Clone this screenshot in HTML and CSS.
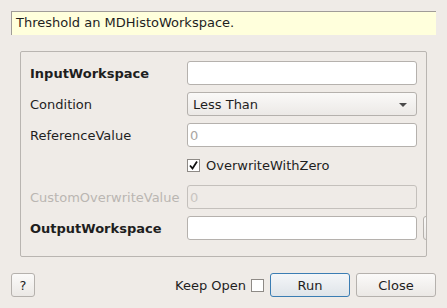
FILE: index.html
```html
<!DOCTYPE html>
<html lang="en">
<head>
  <meta charset="UTF-8">
  <title>ThresholdMDHisto Input Dialog</title>
  <link rel="stylesheet" href="styles.css">
</head>
<body>
  <div class="dialog">
    <div class="description">Threshold an MDHistoWorkspace.</div>

    <div class="group-box">
      <div class="form-grid">
        <label class="prop-label required">InputWorkspace</label>
        <input class="line-edit" type="text">

        <label class="prop-label">Condition</label>
        <div class="combo">
          <span>Less Than</span>
          <span class="combo-arrow"></span>
        </div>

        <label class="prop-label">ReferenceValue</label>
        <input class="line-edit" type="text" placeholder="0">

        <span></span>
        <div class="check-row">
          <span class="check-box checked">
            <svg width="11" height="11" viewBox="0 0 11 11">
              <path d="M2 5.5 L4.5 8.5 L9 1.5" fill="none" stroke="#111" stroke-width="1.8"/>
            </svg>
          </span>
          <span>OverwriteWithZero</span>
        </div>

        <label class="prop-label disabled">CustomOverwriteValue</label>
        <input class="line-edit" type="text" placeholder="0" disabled>

        <label class="prop-label required">OutputWorkspace</label>
        <div class="output-row">
          <input class="line-edit" type="text">
          <button class="btn browse-btn"></button>
        </div>
      </div>
    </div>

    <div class="button-bar">
      <button class="btn help-btn">?</button>
      <div class="spacer"></div>
      <span class="keep-open">Keep Open</span>
      <span class="check-box"></span>
      <button class="btn btn-default">Run</button>
      <button class="btn">Close</button>
    </div>
  </div>
</body>
</html>
```

FILE: styles.css
```css
* {
  margin: 0;
  padding: 0;
  box-sizing: border-box;
}

:root {
  --window: #efebe7;
  --text: #1e1e1e;
  --border: #b5b1ad;
  --frame: #b9b5b1;
  --disabled: #bab6b2;
}

body {
  width: 447px;
  height: 308px;
  background: var(--window);
  font-family: 'DejaVu Sans', sans-serif;
  font-size: 13px;
  color: var(--text);
  overflow: hidden;
}

.dialog {
  padding: 11px 11px 0 11px;
}

.description {
  height: 24px;
  line-height: 22px;
  padding-left: 4px;
  background: #ffffdc;
  border-top: 1px solid #a09c98;
  border-left: 1px solid #a09c98;
}

.group-box {
  margin: 16px 9px 0 9px;
  height: 206px;
  border: 1px solid var(--frame);
  border-radius: 2px;
  padding: 9px 9px 0 9px;
  overflow: hidden;
}

.form-grid {
  display: grid;
  grid-template-columns: 157px 230px;
  grid-template-rows: 24px 24px 24px 24px 24px 24px;
  row-gap: 7px;
  align-items: center;
}

.prop-label {
  white-space: nowrap;
}

.prop-label.required {
  font-weight: bold;
}

.prop-label.disabled {
  color: var(--disabled);
}

.line-edit {
  width: 230px;
  height: 24px;
  border: 1px solid var(--border);
  border-radius: 3px;
  background: #fff;
  font-family: inherit;
  font-size: 13px;
  padding: 0 2px;
  color: var(--text);
  outline: none;
}

.line-edit::placeholder {
  color: #aaa6a2;
}

.line-edit:disabled {
  background: var(--window);
  border-color: #c4c0bc;
}

.line-edit:disabled::placeholder {
  color: #c9c5c1;
}

.combo {
  height: 24px;
  border: 1px solid var(--border);
  border-radius: 3px;
  background: linear-gradient(#faf9f8, #ece9e6);
  display: flex;
  align-items: center;
  justify-content: space-between;
  padding: 0 9px 0 5px;
}

.combo-arrow {
  width: 0;
  height: 0;
  border-left: 4px solid transparent;
  border-right: 4px solid transparent;
  border-top: 4px solid #4a4a4a;
  margin-top: 1px;
}

.check-row {
  display: flex;
  align-items: center;
  gap: 6px;
  margin-top: -2px;
}

.check-box {
  width: 13px;
  height: 13px;
  border: 1px solid #8e8a86;
  background: #fff;
  display: flex;
  align-items: center;
  justify-content: center;
}

.output-row {
  display: flex;
  gap: 6px;
  height: 24px;
}

.output-row .line-edit {
  flex: none;
}

.btn {
  height: 24px;
  width: 80px;
  border: 1px solid var(--border);
  border-radius: 3px;
  background: linear-gradient(#fbfaf9, #ebe8e5);
  font-family: inherit;
  font-size: 13px;
  color: var(--text);
}

.browse-btn {
  flex: none;
  width: 24px;
}

.button-bar {
  display: flex;
  align-items: center;
  margin-top: 16px;
}

.help-btn {
  width: 24px;
}

.spacer {
  flex: 1;
}

.keep-open {
  margin-right: 5px;
}

.button-bar .check-box {
  margin-right: 6px;
}

.btn-default {
  border-color: #3b7db3;
  background: linear-gradient(#f4f6f8, #dfe4e9);
  margin-right: 6px;
}
```
